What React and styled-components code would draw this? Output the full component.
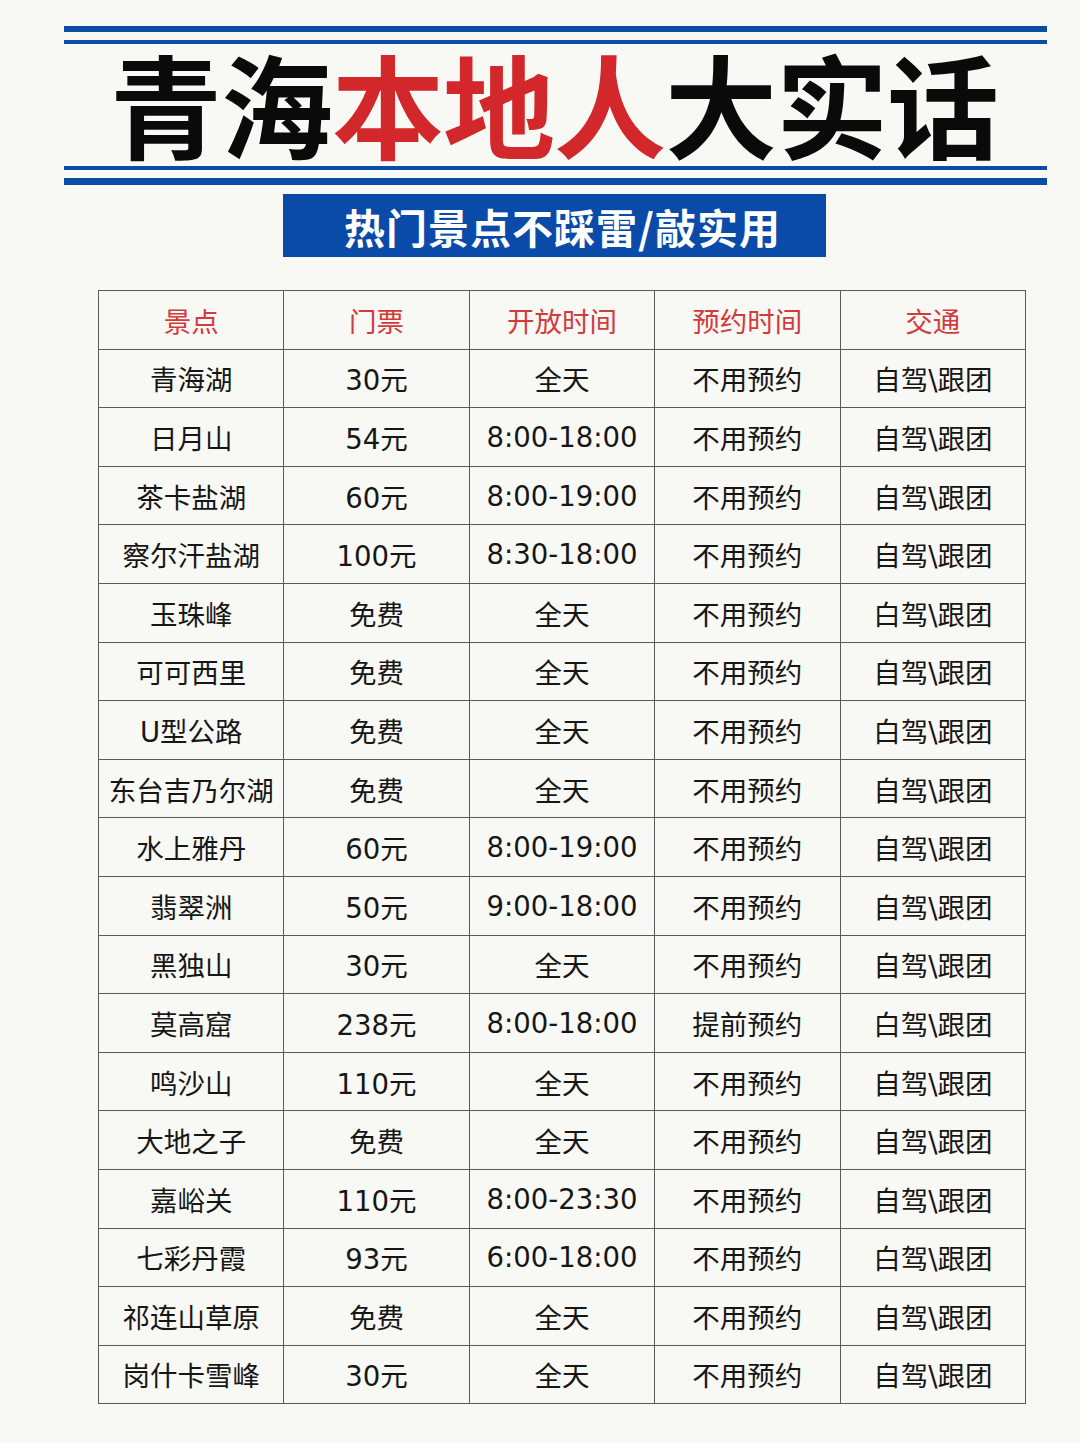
import React from 'react';
import styled, { createGlobalStyle } from 'styled-components';

const GlobalStyle = createGlobalStyle`
  body {
    margin: 0;
    background: #f8f8f4;
    font-family: "Noto Sans CJK SC", "Noto Sans", sans-serif;
  }
`;

const Page = styled.div`
  width: 1080px;
  height: 1443px;
  padding-top: 26px;
  box-sizing: border-box;
  overflow: hidden;
`;

const Rule = styled.div`
  margin-left: 64px;
  width: 983px;
  height: ${p => p.h}px;
  margin-top: ${p => p.gap || 0}px;
  background: #0b4da6;
`;

const Title = styled.h1`
  margin: 0;
  height: 122px;
  line-height: 116px;
  font-size: 112px;
  font-weight: 700;
  letter-spacing: -1px;
  text-align: center;
  padding-left: 28px;
  color: #0a0a0a;
  white-space: nowrap;
`;

const Red = styled.span`
  color: #d2272b;
`;

const Banner = styled.div`
  margin: 9px 0 0 283px;
  width: 543px;
  height: 63px;
  box-sizing: border-box;
  padding-left: 16px;
  background: #0a4aa8;
  color: #fff;
  font-size: 41px;
  font-weight: 700;
  display: flex;
  align-items: center;
  justify-content: center;
  letter-spacing: 1px;
`;

const Table = styled.table`
  margin: 33px 0 0 98px;
  width: 928px;
  border-collapse: collapse;
  table-layout: fixed;
`;

const Cell = styled.td`
  border: 1.5px solid #5a5a5a;
  height: 57.6px;
  padding: 0;
  text-align: center;
  font-family: "DejaVu Sans", "Noto Sans CJK SC", sans-serif;
  font-size: 27.5px;
  color: ${p => (p.head ? '#d23a3c' : '#161616')};
  font-weight: 400;
  white-space: nowrap;
`;

const head = ['景点', '门票', '开放时间', '预约时间', '交通'];

const rows = [
  ['青海湖', '30元', '全天', '不用预约', '自驾\\跟团'],
  ['日月山', '54元', '8:00-18:00', '不用预约', '自驾\\跟团'],
  ['茶卡盐湖', '60元', '8:00-19:00', '不用预约', '自驾\\跟团'],
  ['察尔汗盐湖', '100元', '8:30-18:00', '不用预约', '自驾\\跟团'],
  ['玉珠峰', '免费', '全天', '不用预约', '白驾\\跟团'],
  ['可可西里', '免费', '全天', '不用预约', '自驾\\跟团'],
  ['U型公路', '免费', '全天', '不用预约', '白驾\\跟团'],
  ['东台吉乃尔湖', '免费', '全天', '不用预约', '自驾\\跟团'],
  ['水上雅丹', '60元', '8:00-19:00', '不用预约', '自驾\\跟团'],
  ['翡翠洲', '50元', '9:00-18:00', '不用预约', '自驾\\跟团'],
  ['黑独山', '30元', '全天', '不用预约', '自驾\\跟团'],
  ['莫高窟', '238元', '8:00-18:00', '提前预约', '白驾\\跟团'],
  ['鸣沙山', '110元', '全天', '不用预约', '自驾\\跟团'],
  ['大地之子', '免费', '全天', '不用预约', '自驾\\跟团'],
  ['嘉峪关', '110元', '8:00-23:30', '不用预约', '自驾\\跟团'],
  ['七彩丹霞', '93元', '6:00-18:00', '不用预约', '白驾\\跟团'],
  ['祁连山草原', '免费', '全天', '不用预约', '自驾\\跟团'],
  ['岗什卡雪峰', '30元', '全天', '不用预约', '自驾\\跟团'],
];

export default function App() {
  return (
    <Page>
      <GlobalStyle />
      <Rule h={6} />
      <Rule h={4} gap={8} />
      <Title>
        青海<Red>本地人</Red>大实话
      </Title>
      <Rule h={4} />
      <Rule h={7} gap={8} />
      <Banner>热门景点不踩雷/敲实用</Banner>
      <Table>
        <tbody>
          <tr>
            {head.map(h => (
              <Cell head key={h}>{h}</Cell>
            ))}
          </tr>
          {rows.map((r, i) => (
            <tr key={i}>
              {r.map((c, j) => (
                <Cell key={j}>{c}</Cell>
              ))}
            </tr>
          ))}
        </tbody>
      </Table>
    </Page>
  );
}
